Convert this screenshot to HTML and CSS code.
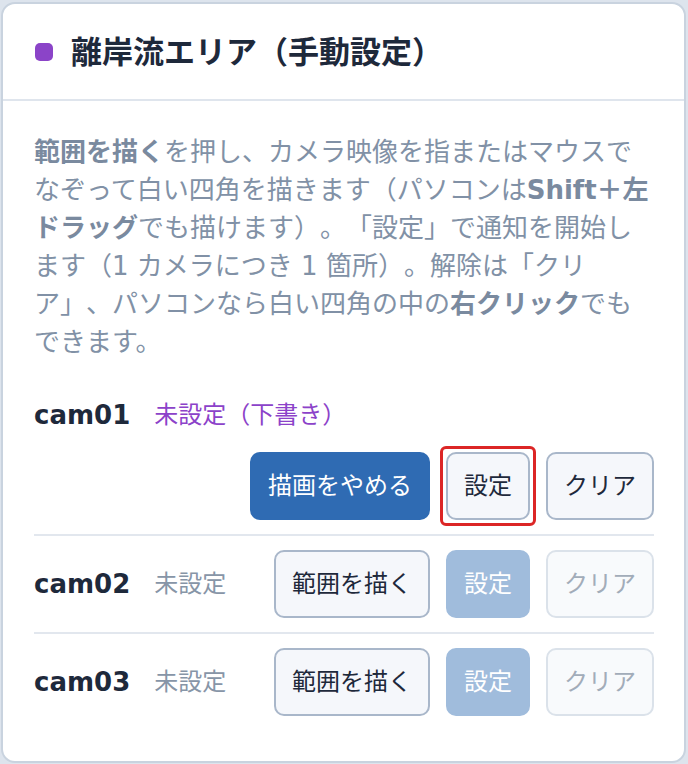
FILE: index.html
```html
<!DOCTYPE html>
<html lang="ja">
<head>
<meta charset="utf-8">
<title>離岸流エリア（手動設定）</title>
<link rel="stylesheet" href="styles.css">
</head>
<body>
<section class="card">
  <header class="card-head">
    <span class="dot"></span>
    <h2 class="title">離岸流エリア（手動設定）</h2>
  </header>
  <div class="card-body">
    <p class="help"><b>範囲を描く</b>を押し、カメラ映像を指またはマウスでなぞって白い四角を描きます（パソコンは<b>Shift＋左ドラッグ</b>でも描けます）。「設定」で通知を開始します（1 カメラにつき 1 箇所）。解除は「クリア」、パソコンなら白い四角の中の<b>右クリック</b>でもできます。</p>
    <div class="cams">
      <div class="cam-row">
        <span class="cam-name">cam01</span>
        <span class="cam-status draft">未設定（下書き）</span>
        <div class="actions">
          <button class="btn btn-primary" type="button">描画をやめる</button>
          <button class="btn btn-focus" type="button">設定</button>
          <button class="btn" type="button">クリア</button>
        </div>
      </div>
      <div class="cam-row">
        <span class="cam-name">cam02</span>
        <span class="cam-status">未設定</span>
        <div class="actions">
          <button class="btn" type="button">範囲を描く</button>
          <button class="btn btn-primary" type="button" disabled>設定</button>
          <button class="btn" type="button" disabled>クリア</button>
        </div>
      </div>
      <div class="cam-row">
        <span class="cam-name">cam03</span>
        <span class="cam-status">未設定</span>
        <div class="actions">
          <button class="btn" type="button">範囲を描く</button>
          <button class="btn btn-primary" type="button" disabled>設定</button>
          <button class="btn" type="button" disabled>クリア</button>
        </div>
      </div>
    </div>
  </div>
</section>
</body>
</html>
```
FILE: styles.css
```css
html, body {
  margin: 0;
  background: #dde4ed;
}
body {
  padding: 2px 2px 1px 1px;
  font-family: "DejaVu Sans", "Noto Sans CJK JP", sans-serif;
  color: #1e293b;
  text-spacing-trim: space-all;
}
.card {
  background: #ffffff;
  border: 2px solid #c9d3df;
  border-radius: 14px;
  overflow: hidden;
}
.card-head {
  display: flex;
  align-items: center;
  gap: 18px;
  height: 95px;
  padding: 0 30px 0 32px;
  border-bottom: 2px solid #dfe5ed;
}
.dot {
  width: 18px;
  height: 18px;
  border-radius: 5px;
  background: #8b44c8;
  flex: none;
}
.title {
  margin: 0;
  font-size: 31px;
  font-weight: 700;
  line-height: 40px;
  color: #1e293b;
}
.card-body {
  padding: 32px 30px 31px 31px;
}
.help {
  margin: 0 0 22px;
  font-size: 26px;
  line-height: 38px;
  color: #8191a6;
}
.help b {
  font-weight: 700;
  color: #7a8a9f;
}
.cam-row {
  display: flex;
  flex-wrap: wrap;
  align-items: center;
  column-gap: 24px;
  row-gap: 19px;
  padding: 14px 0;
}
.cam-row + .cam-row {
  border-top: 2px solid #e2e7ee;
}
.cam-name {
  font-size: 26px;
  font-weight: 700;
  line-height: 36px;
  color: #1e293b;
}
.cam-status {
  font-size: 24px;
  line-height: 36px;
  color: #8795a7;
}
.cam-status.draft {
  color: #8c42c9;
}
.actions {
  display: flex;
  gap: 16px;
  margin-left: auto;
}
.btn {
  position: relative;
  height: 68px;
  padding: 0 16px;
  font-family: inherit;
  font-size: 24px;
  line-height: 1;
  color: #1e293b;
  background: #f5f7fb;
  border: 2px solid #a9b7ca;
  border-radius: 10px;
}
.btn-primary {
  background: #2f6bb3;
  border-color: #2f6bb3;
  color: #ffffff;
}
.btn-primary:disabled {
  background: #a0bcdc;
  border-color: #a0bcdc;
  color: #ffffff;
}
.btn:disabled:not(.btn-primary) {
  background: #f8fafc;
  border-color: #dbe2ea;
  color: #a2acb9;
}
.btn-focus::after {
  content: "";
  position: absolute;
  inset: -8px;
  border: 3px solid #dc2626;
  border-radius: 6px;
  pointer-events: none;
}
```
